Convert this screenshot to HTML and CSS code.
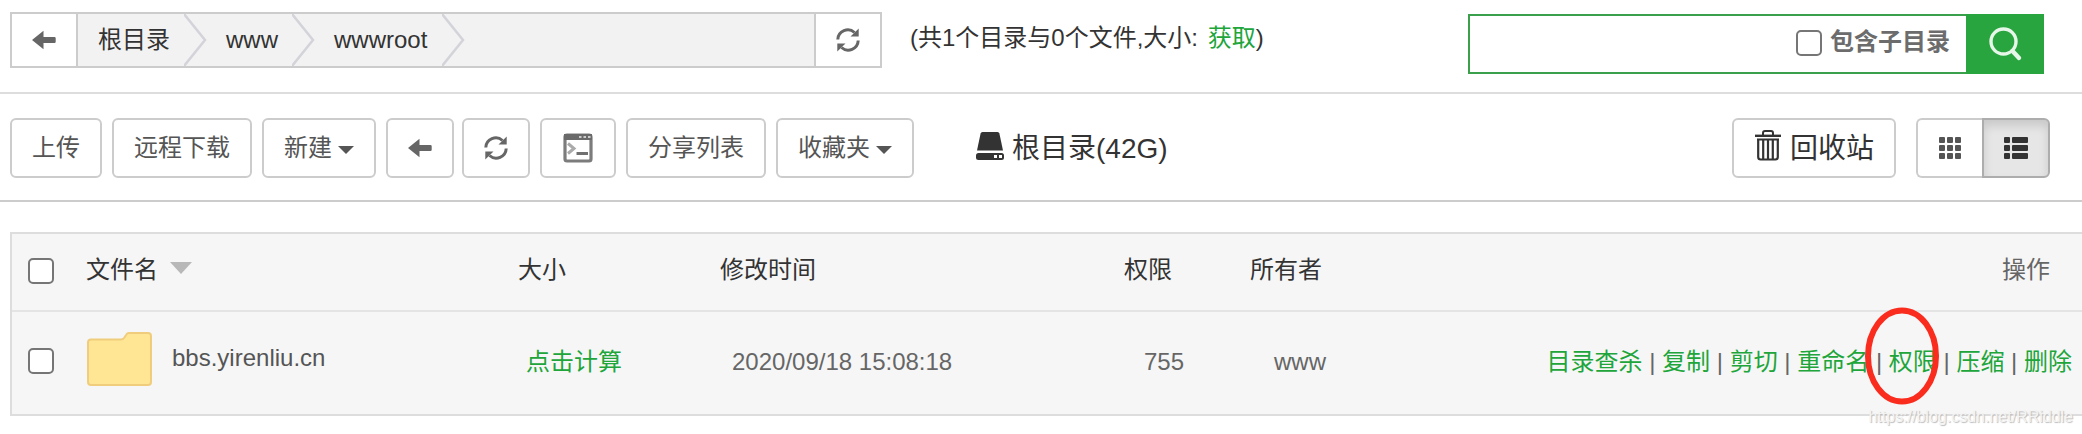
FILE: index.html
```html
<!DOCTYPE html>
<html lang="zh-CN">
<head>
<meta charset="utf-8">
<title>文件管理</title>
<link rel="stylesheet" href="styles.css">
</head>
<body>
<svg class="defs" width="0" height="0">
  <symbol id="arrow" viewBox="0 0 24 20"><path d="M0 10 11.500 .7V7h11q1.200 0 1.200 1.200v3.600q0 1.200-1.200 1.200h-11v6.300z" fill="currentColor"/></symbol>
  <symbol id="refresh" viewBox="0 0 24 24"><path d="M1.800 11.500A10 10 0 0 1 18.500 4.500M22.200 12.500A10 10 0 0 1 5.500 19.500" fill="none" stroke="currentColor" stroke-width="3"/><path d="M22.700.5V8.500H14.500zM1.300 23.500V15.500H9.500z" fill="currentColor"/></symbol>
</svg>
<header class="topbar">
  <nav class="path">
    <button class="path-btn"><svg class="i-arrow"><use href="#arrow"/></svg></button>
    <ul class="crumbs">
      <li class="crumb c1">根目录<svg class="chev" viewBox="0 0 24 52"><path d="M0 0 21 26 0 52"/></svg></li>
      <li class="crumb c2">www<svg class="chev" viewBox="0 0 24 52"><path d="M0 0 21 26 0 52"/></svg></li>
      <li class="crumb c3">wwwroot<svg class="chev" viewBox="0 0 24 52"><path d="M0 0 21 26 0 52"/></svg></li>
    </ul>
    <button class="path-btn last"><svg class="i-refresh"><use href="#refresh"/></svg></button>
  </nav>
  <p class="info">(共1个目录与0个文件,大小: <a class="green fetch">获取</a>)</p>
  <div class="search">
    <span class="box"></span><span class="search-label">包含子目录</span>
    <button class="search-btn"><svg width="36" height="36" viewBox="0 0 36 36"><circle cx="16.500" cy="15.500" r="12.500" fill="none" stroke="#e6f6e9" stroke-width="3.400"/><path d="m25.500 25 6.500 7" stroke="#e6f6e9" stroke-width="4.400" stroke-linecap="round"/></svg></button>
  </div>
</header>
<section class="tools">
  <button class="btn w1">上传</button>
  <button class="btn w2">远程下载</button>
  <button class="btn w3">新建<i class="caret"></i></button>
  <button class="btn w4"><svg class="i-arrow"><use href="#arrow"/></svg></button>
  <button class="btn w5"><svg class="i-refresh"><use href="#refresh"/></svg></button>
  <button class="btn w6"><svg width="30" height="30" viewBox="0 0 30 30"><rect x="2" y="2" width="26" height="26" rx="2" fill="#fff" stroke="#7c7c7c" stroke-width="3.200"/><path d="M1 1h28v6H1z" fill="#6a6a6a"/><path d="M16 4h2.500M20.500 4H23M25 4h2.500" stroke="#ccc" stroke-width="2"/><path d="m5 10.500 6 5-6 5" fill="none" stroke="#aaa" stroke-width="3"/><path d="M13.500 20.500H25" stroke="#707070" stroke-width="3"/></svg></button>
  <button class="btn w7">分享列表</button>
  <button class="btn w8">收藏夹<i class="caret"></i></button>
  <div class="disk"><svg width="28" height="29" viewBox="0 0 28 29"><path d="M6.500 0h15q1.500 0 1.900 1.500L27 18.500H1L4.600 1.500Q5 0 6.500 0z" fill="#333"/><path d="M2.500 21h23q2.500 0 2.500 2.500v2q0 2.500-2.500 2.500h-23Q0 28 0 25.500v-2Q0 21 2.500 21z" fill="#333"/><path d="M18 23h3v3h-3zM23 23h3v3h-3z" fill="#fff"/></svg><span>根目录(42G)</span></div>
  <button class="btn recycle"><svg width="26" height="31" viewBox="0 0 26 31"><path d="M8 5V3q0-2 2-2h6q2 0 2 2v2" fill="none" stroke="#333" stroke-width="2"/><path d="M0 5.800h26" stroke="#333" stroke-width="2.400"/><path d="M3.200 9v18q0 2.500 2.500 2.500h14.600q2.500 0 2.500-2.500V9M8.200 9v20M13 9v20M17.800 9v20M2 9.500h22" fill="none" stroke="#333" stroke-width="2.200"/></svg><span>回收站</span></button>
  <div class="views">
    <button class="view"><svg width="22" height="22" viewBox="0 0 22 22" fill="#555"><g id="r"><rect width="6" height="6" rx="1"/><rect x="8" width="6" height="6" rx="1"/><rect x="16" width="6" height="6" rx="1"/></g><use href="#r" y="8"/><use href="#r" y="16"/></svg></button>
    <button class="view active"><svg width="24" height="22" viewBox="0 0 24 22" fill="#333"><g id="l"><rect width="6" height="6" rx="1"/><rect x="8" width="16" height="6" rx="1"/></g><use href="#l" y="8"/><use href="#l" y="16"/></svg></button>
  </div>
</section>
<main class="table">
  <div class="row head">
    <span class="cell check"><span class="box"></span></span>
    <span class="cell name">文件名<i class="sort"></i></span>
    <span class="cell size">大小</span>
    <span class="cell time">修改时间</span>
    <span class="cell perm">权限</span>
    <span class="cell owner">所有者</span>
    <span class="cell ops">操作</span>
  </div>
  <div class="row item">
    <span class="cell check"><span class="box"></span></span>
    <span class="cell name"><svg class="folder" width="65" height="54" viewBox="0 0 65 54"><path d="M4 7.500h30q2 0 3.200-1.800l2-3Q40.200 1 42 1h19q3 0 3 3v46q0 3-3 3H4q-3 0-3-3V10.500q0-3 3-3z" fill="#ffe694" stroke="#f0cd7c" stroke-width="2"/></svg><span class="fname">bbs.yirenliu.cn</span></span>
    <span class="cell size green">点击计算</span>
    <span class="cell time">2020/09/18 15:08:18</span>
    <span class="cell perm">755</span>
    <span class="cell owner">www</span>
    <span class="cell ops"><a>目录查杀</a> | <a>复制</a> | <a>剪切</a> | <a>重命名</a> | <a class="marked">权限<svg class="ring" width="74" height="98" viewBox="0 0 74 98"><ellipse cx="37" cy="49" rx="34" ry="45.500" fill="none" stroke="#fa2c1e" stroke-width="6"/></svg></a> | <a>压缩</a> | <a>删除</a></span>
  </div>
</main>
<div class="watermark">https://blog.csdn.net/RRiddle</div>
</body>
</html>
```
FILE: styles.css
```css
* { box-sizing: border-box; }
body { margin: 0; width: 2082px; height: 434px; overflow: hidden; position: relative; background: #fff; color: #333; font: 24px/34px "Liberation Sans", "Noto Sans CJK SC", sans-serif; }
button { font: inherit; color: #555; padding: 0; margin: 0; background: #fff; display: flex; align-items: center; justify-content: center; }
.defs { display: block; position: absolute; }
.green, .ops a { color: #20a53a; }
.i-arrow { width: 24px; height: 20px; color: #666; }
.i-refresh { width: 24px; height: 24px; color: #666; }

.topbar { height: 94px; border-bottom: 2px solid #ddd; display: flex; align-items: flex-start; padding-left: 10px; }
.path { margin-top: 12px; width: 872px; height: 56px; border: 2px solid #ccc; display: flex; }
.path-btn { width: 66px; border: 0; border-right: 2px solid #ccc; flex: none; }
.path-btn.last { border-right: 0; border-left: 2px solid #ccc; width: 66px; }
.crumbs { flex: 1; margin: 0; padding: 0; list-style: none; display: flex; background: #f2f2f2; }
.crumb { display: flex; align-items: center; justify-content: space-between; white-space: nowrap; padding-left: 20px; height: 52px; }
.c1 { width: 128px; }
.c2 { width: 108px; }
.c3 { width: 150px; }
.chev { width: 24px; height: 52px; flex: none; margin-right: -2px; fill: none; stroke: #d3d3da; stroke-width: 2.5; }
.info { margin: 21px 0 0 28px; white-space: pre; }
.fetch { margin-left: 3px; }
.search { margin: 14px 38px 0 auto; width: 576px; height: 60px; border: 2px solid #3aa04c; border-right: 0; display: flex; align-items: center; justify-content: flex-end; }
.box { display: block; width: 26px; height: 26px; border: 2px solid #767676; border-radius: 5px; background: #fff; }
.search .box { margin-top: -2px; }
.search-label { margin: -4px 16px 0 8px; font-weight: bold; color: #6c6c6c; }
.search-btn { width: 78px; height: 60px; border: 0; background: #28a53f; }

.tools { height: 108px; border-bottom: 2px solid #ccc; padding: 24px 32px 0 10px; display: flex; align-items: flex-start; }
.btn { height: 60px; border: 2px solid #ccc; border-radius: 6px; flex: none; margin-right: 10px; }
.w1 { width: 92px; }
.w2 { width: 140px; }
.w3 { width: 114px; }
.w4 { width: 68px; margin-right: 8px; }
.w5 { width: 68px; }
.w6 { width: 76px; }
.w7 { width: 140px; }
.w8 { width: 138px; }
.caret { margin: 3px 0 0 6px; border: 8px solid transparent; border-top-color: #555; border-bottom: 0; }
.disk { display: flex; align-items: center; height: 60px; font-size: 28px; margin-left: 52px; gap: 8px; }
.disk span { padding-top: 1px; }
.disk svg { margin-top: -4px; }
.recycle { margin-left: auto; width: 164px; font-size: 28px; color: #333; gap: 9px; padding-left: 1px; margin-right: 20px; }
.recycle span { padding-top: 1px; }
.recycle svg { margin-top: -6px; }
.views { display: flex; }
.view { width: 66px; height: 60px; border: 2px solid #ccc; border-right: 0; border-radius: 6px 0 0 6px; }
.view.active { width: 68px; border: 2px solid #adadad; border-radius: 0 6px 6px 0; background: #e6e6e6; box-shadow: inset 0 6px 10px rgba(0,0,0,.125); }

.table { margin: 30px 0 0 10px; border: 2px solid #ddd; border-right: 0; background: #f6f6f6; height: 184px; }
.row { display: grid; grid-template-columns: 74px 432px 202px 404px 126px 280px 1fr; }
.head { height: 78px; border-bottom: 2px solid #e4e4e4; }
.item { height: 102px; color: #666; }
.cell { display: flex; align-items: center; white-space: pre; min-width: 0; }
.check { padding-left: 16px; }
.head .cell { padding-bottom: 4px; }
.head .check { padding-bottom: 2px; }
.item .cell { padding-bottom: 3px; }
.item .check { padding-bottom: 4px; }
.sort { border: 11px solid transparent; border-top: 12px solid #b8b8b8; border-bottom: 0; margin: -5px 0 0 12px; }
.folder { margin: -6px 20px 0 1px; flex: none; }
.fname { margin-top: -7px; color: #555; }
.item .size { padding-left: 8px; }
.item .time { padding-left: 12px; }
.item .perm { padding-left: 20px; }
.item .owner { padding-left: 24px; }
.ops { justify-content: flex-end; padding-right: 10px; }
.head .ops { padding-right: 32px; color: #666; }
.marked { position: relative; }
.ring { position: absolute; left: -24px; top: -38px; }
.watermark { position: absolute; right: 9px; bottom: 6px; font-size: 16px; line-height: 22px; color: #f4f4f4; text-shadow: 1px 1px 1px #bbb; }
```
